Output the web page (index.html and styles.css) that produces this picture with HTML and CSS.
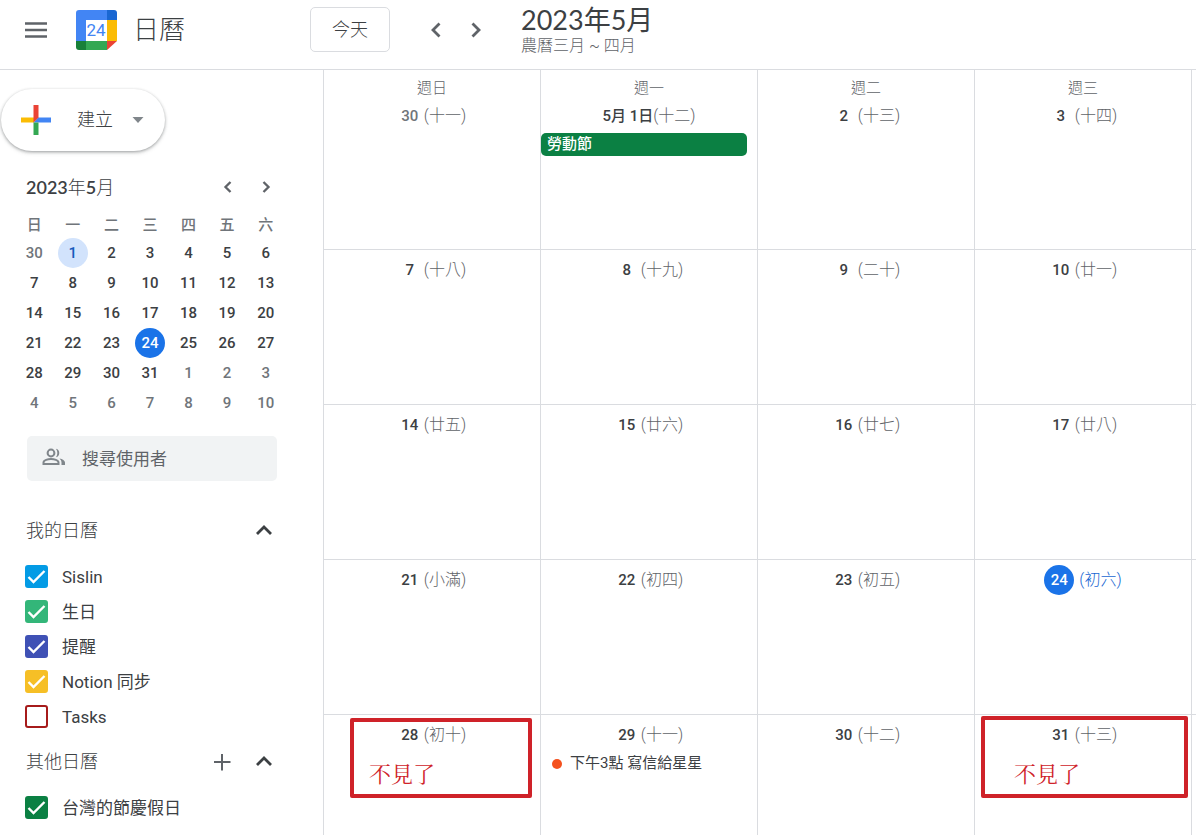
FILE: index.html
```html
<!DOCTYPE html>
<html lang="zh-Hant">
<head>
    <meta charset="UTF-8">
    <meta name="viewport" content="width=device-width, initial-scale=1">
    <title>日曆</title>
    <link rel="stylesheet" href="styles.css">
</head>
<body>
    <header class="topbar">
        <button class="icon-btn menu-btn" aria-label="主選單">
            <svg width="24" height="18" viewBox="0 0 24 18"><path d="M1 2.5h22M1 9h22M1 15.5h22" stroke="#5f6368" stroke-width="2.4"/></svg>
        </button>
        <svg class="logo" width="41" height="40" viewBox="0 0 41 40">
            <path d="M3 0H31V10H10V31H0V3Q0 0 3 0Z" fill="#4285f4"/>
            <path d="M31 0H38Q41 0 41 3V10H31Z" fill="#1967d2"/>
            <path d="M31 10H41V31H31Z" fill="#fbbc04"/>
            <path d="M10 31H31V40H10Z" fill="#34a853"/>
            <path d="M0 31H10V40H3Q0 40 0 37Z" fill="#188038"/>
            <path d="M31 31H41L31 40Z" fill="#ea4335"/>
            <path d="M10 10H31V31H10Z" fill="#fff"/>
            <text x="20" y="26" text-anchor="middle" class="logo-text">24</text>
        </svg>
        <span class="app-name">日曆</span>
        <button class="today-btn">今天</button>
        <div class="pager">
            <button class="icon-btn" aria-label="上個月"><svg width="24" height="24" viewBox="0 0 24 24"><path d="M15.5 5.5L9 12l6.500 6.500" class="arrow"/></svg></button>
            <button class="icon-btn" aria-label="下個月"><svg width="24" height="24" viewBox="0 0 24 24"><path d="M8.500 5.500L15 12l-6.500 6.500" class="arrow"/></svg></button>
        </div>
        <div class="heading">
            <h1>2023年5月</h1>
            <p>農曆三月 ~ 四月</p>
        </div>
    </header>

    <div class="layout">
        <aside class="sidebar">
            <button class="create-btn">
                <svg width="32" height="32" viewBox="0 0 32 32">
                    <path d="M1 13.500H14V18.500H1Z" fill="#fbbc04"/>
                    <path d="M18 13.500H31V18.500H18L13.500 18.500Z" fill="#4285f4"/>
                    <path d="M13.500 1H18.500V13.500L13.500 18.500Z" fill="#ea4335"/>
                    <path d="M13.500 18.500H18.500V31H13.500Z" fill="#34a853"/>
                </svg>
                <span>建立</span>
                <svg width="12" height="6" viewBox="0 0 12 6"><path d="M0.500 0H11.500L6 6Z" fill="#80868b"/></svg>
            </button>

            <div class="mini-head">
                <h2><b>2023</b>年<b>5</b>月</h2>
                <button class="icon-btn" aria-label="上個月"><svg width="20" height="20" viewBox="0 0 24 24"><path d="M15 6l-6 6 6 6" class="arrow"/></svg></button>
                <button class="icon-btn" aria-label="下個月"><svg width="20" height="20" viewBox="0 0 24 24"><path d="M9 6l6 6-6 6" class="arrow"/></svg></button>
            </div>
            <table class="mini">
                <thead>
                    <tr><th>日</th><th>一</th><th>二</th><th>三</th><th>四</th><th>五</th><th>六</th></tr>
                </thead>
                <tbody>
                    <tr><td class="other">30</td><td><span class="selected">1</span></td><td>2</td><td>3</td><td>4</td><td>5</td><td>6</td></tr>
                    <tr><td>7</td><td>8</td><td>9</td><td>10</td><td>11</td><td>12</td><td>13</td></tr>
                    <tr><td>14</td><td>15</td><td>16</td><td>17</td><td>18</td><td>19</td><td>20</td></tr>
                    <tr><td>21</td><td>22</td><td>23</td><td><span class="now">24</span></td><td>25</td><td>26</td><td>27</td></tr>
                    <tr><td>28</td><td>29</td><td>30</td><td>31</td><td class="other">1</td><td class="other">2</td><td class="other">3</td></tr>
                    <tr class="other"><td>4</td><td>5</td><td>6</td><td>7</td><td>8</td><td>9</td><td>10</td></tr>
                </tbody>
            </table>

            <div class="search">
                <svg width="24" height="22" viewBox="0 0 24 22">
                    <circle cx="9" cy="5" r="3.400" fill="none" stroke="#80868b" stroke-width="2"/>
                    <path d="M1.500 16v-1.500C1.500 12 6 11 9 11s7.500 1 7.500 3.500V16z" fill="none" stroke="#80868b" stroke-width="2"/>
                    <path d="M14 .800a4.400 4.400 0 0 1 0 8.500c1.800-2.500 1.800-6 0-8.500zM17.500 10.400c3 .600 5.500 2 5.500 4.200V17h-3.500v-2.500c0-1.600-.800-3-2-4.100z" fill="#80868b"/>
                </svg>
                <input type="text" placeholder="搜尋使用者" aria-label="搜尋使用者">
            </div>

            <div class="section-head first">
                <h3>我的日曆</h3>
                <button class="icon-btn" aria-label="收合"><svg width="24" height="24" viewBox="0 0 24 24"><path d="M5 15l7-7 7 7" class="arrow dark"/></svg></button>
            </div>
            <ul class="calendars">
                <li><label><input type="checkbox" class="blue" checked>Sislin</label></li>
                <li><label><input type="checkbox" class="mint" checked>生日</label></li>
                <li><label><input type="checkbox" class="indigo" checked>提醒</label></li>
                <li><label><input type="checkbox" class="yellow" checked>Notion 同步</label></li>
                <li><label><input type="checkbox" class="red">Tasks</label></li>
            </ul>
            <div class="section-head">
                <h3>其他日曆</h3>
                <button class="icon-btn" aria-label="新增其他日曆"><svg width="24" height="24" viewBox="0 0 24 24"><path d="M4 12H20.500M12 4V20.500" stroke="#5f6368" stroke-width="2"/></svg></button>
                <button class="icon-btn" aria-label="收合"><svg width="24" height="24" viewBox="0 0 24 24"><path d="M5 15l7-7 7 7" class="arrow dark"/></svg></button>
            </div>
            <ul class="calendars">
                <li><label><input type="checkbox" class="green" checked>台灣的節慶假日</label></li>
            </ul>
        </aside>

        <main class="month">
            <table>
                <colgroup><col><col><col><col><col class="cut"></colgroup>
                <thead>
                    <tr><th>週日</th><th>週一</th><th>週二</th><th>週三</th><th></th></tr>
                </thead>
                <tbody>
                    <tr>
                        <td><div class="date other"><b>30</b><span>(十一)</span></div></td>
                        <td>
                            <div class="date"><strong>5月 1日</strong><span>(十二)</span></div>
                            <div class="event holiday">勞動節</div>
                        </td>
                        <td><div class="date"><b>2</b><span>(十三)</span></div></td>
                        <td><div class="date"><b>3</b><span>(十四)</span></div></td>
                        <td></td>
                    </tr>
                    <tr>
                        <td><div class="date"><b>7</b><span>(十八)</span></div></td>
                        <td><div class="date"><b>8</b><span>(十九)</span></div></td>
                        <td><div class="date"><b>9</b><span>(二十)</span></div></td>
                        <td><div class="date"><b>10</b><span>(廿一)</span></div></td>
                        <td></td>
                    </tr>
                    <tr>
                        <td><div class="date"><b>14</b><span>(廿五)</span></div></td>
                        <td><div class="date"><b>15</b><span>(廿六)</span></div></td>
                        <td><div class="date"><b>16</b><span>(廿七)</span></div></td>
                        <td><div class="date"><b>17</b><span>(廿八)</span></div></td>
                        <td></td>
                    </tr>
                    <tr>
                        <td><div class="date"><b>21</b><span>(小滿)</span></div></td>
                        <td><div class="date"><b>22</b><span>(初四)</span></div></td>
                        <td><div class="date"><b>23</b><span>(初五)</span></div></td>
                        <td><div class="date today"><b>24</b><span>(初六)</span></div></td>
                        <td></td>
                    </tr>
                    <tr>
                        <td>
                            <div class="date"><b>28</b><span>(初十)</span></div>
                            <div class="note note-left">不見了</div>
                        </td>
                        <td>
                            <div class="date"><b>29</b><span>(十一)</span></div>
                            <div class="event timed">下午3點 寫信給星星</div>
                        </td>
                        <td><div class="date"><b>30</b><span>(十二)</span></div></td>
                        <td>
                            <div class="date"><b>31</b><span>(十三)</span></div>
                            <div class="note note-right">不見了</div>
                        </td>
                        <td></td>
                    </tr>
                </tbody>
            </table>
        </main>
    </div>
</body>
</html>
```
FILE: styles.css
```css
* {
    box-sizing: border-box;
}

body {
    margin: 0;
    height: 100vh;
    display: flex;
    flex-direction: column;
    overflow: hidden;
    font-family: Roboto, "Noto Sans CJK TC", sans-serif;
    line-height: 24px;
    color: #3c4043;
    background-color: #fff;
}

h1, h2, h3, p, ul {
    margin: 0;
    padding: 0;
    font-weight: 300;
}

button, input {
    font-family: inherit;
    line-height: inherit;
    color: inherit;
}

.icon-btn {
    display: flex;
    padding: 0;
    border: 0;
    background: none;
    cursor: pointer;
}

.arrow {
    fill: none;
    stroke: #5f6368;
    stroke-width: 2.8;
}

.arrow.dark {
    stroke: #3c4043;
}

/* top bar */
.topbar {
    flex: none;
    display: flex;
    align-items: center;
    height: 70px;
    padding: 0 24px 10px;
    border-bottom: 1px solid #dadce0;
}

.logo {
    margin-left: 28px;
}

.logo-text {
    font-size: 17px;
    fill: #4285f4;
}

.app-name {
    width: 177px;
    margin-left: 16px;
    font-size: 26px;
    font-weight: 300;
}

.today-btn {
    width: 80px;
    height: 45px;
    border: 1px solid #dadce0;
    border-radius: 5px;
    background-color: #fff;
    font-size: 18px;
    font-weight: 300;
}

.pager {
    display: flex;
    gap: 16px;
    margin-left: 34px;
}

.heading {
    margin-left: 33px;
    padding-top: 4px;
}

.heading h1 {
    font-family: Lato, "Noto Sans CJK TC", sans-serif;
    font-size: 27px;
    line-height: 28px;
    font-weight: 400;
}

.heading h1,
.mini-head h2 {
    white-space: nowrap;
}

.heading p {
    font-size: 16px;
    line-height: 24px;
    color: #5f6368;
}

/* sidebar */
.layout {
    flex: 1;
    display: flex;
    min-height: 0;
}

.sidebar {
    flex: none;
    width: 323px;
    overflow: hidden;
}

.create-btn {
    display: flex;
    align-items: center;
    height: 62px;
    margin: 19px 0 0 1px;
    padding: 0 21px 0 19px;
    border: 0;
    border-radius: 31px;
    background-color: #fff;
    box-shadow: 0 1px 3px rgba(60,64,67,0.4), 0 2px 4px rgba(60,64,67,0.15);
    font-size: 18px;
    font-weight: 300;
}

.create-btn span {
    margin: 0 19px 0 25px;
}

.mini-head {
    display: flex;
    align-items: center;
    gap: 18px;
    height: 32px;
    margin: 20px 47px 8px 26px;
}

.mini-head h2 {
    flex: 1;
    font-family: Lato, "Noto Sans CJK TC", sans-serif;
    font-size: 18px;
}

.mini-head b {
    font-weight: 600;
}

.mini {
    width: 270px;
    margin-left: 15px;
    table-layout: fixed;
    border-spacing: 0;
    text-align: center;
    font-size: 15px;
}

.mini th,
.mini td {
    height: 30px;
    padding: 0;
    font-weight: 500;
}

.mini th {
    height: 27px;
    font-size: 15px;
    color: #70757a;
}

.mini .other {
    color: #70757a;
}

.mini span {
    display: block;
    width: 30px;
    margin: 0 auto;
    border-radius: 50%;
    line-height: 30px;
}

.mini .selected {
    background-color: #d2e3fc;
    color: #185abc;
}

.mini .now {
    background-color: #1a73e8;
    color: #fff;
}

.search {
    display: flex;
    align-items: center;
    height: 45px;
    margin: 18px 46px 0 27px;
    padding-left: 15px;
    border-radius: 5px;
    background-color: #f1f3f4;
}

.search svg {
    flex: none;
}

.search input {
    width: 100%;
    margin-left: 16px;
    padding: 0;
    border: 0;
    outline: 0;
    background: none;
    font-size: 17px;
}

.search input::placeholder {
    color: #5f6368;
}

.section-head {
    display: flex;
    align-items: center;
    gap: 18px;
    height: 56px;
    padding: 0 47px 0 26px;
}

.section-head.first {
    margin-top: 22px;
}

.section-head h3 {
    flex: 1;
    font-size: 18px;
}

.calendars {
    list-style: none;
}

.calendars label {
    display: flex;
    align-items: center;
    height: 35px;
    padding-left: 25px;
    font-size: 17px;
}

.calendars li {
    font-weight: 400;
}

.calendars input {
    appearance: none;
    width: 23px;
    height: 23px;
    margin: 0 14px 0 0;
    border: 2px solid;
    border-radius: 3px;
}

.calendars input:checked {
    background: currentColor url("data:image/svg+xml,%3Csvg xmlns='http://www.w3.org/2000/svg' viewBox='0 0 19 19'%3E%3Cpath d='M1.500 10l5 5L17.500 4' fill='none' stroke='white' stroke-width='2.400'/%3E%3C/svg%3E") no-repeat center / 19px;
}

.blue { color: #039be5; }
.mint { color: #33b679; }
.indigo { color: #3f51b5; }
.yellow { color: #f6bf26; }
.red { color: #a61b1b; }
.green { color: #0b8043; }

/* month grid */
.month {
    flex: 1;
    min-width: 0;
    overflow: hidden;
}

.month table {
    width: 100%;
    table-layout: fixed;
    border-spacing: 0;
}

.month .cut {
    width: 5px;
}

.month th,
.month td {
    padding: 0;
    border-left: 1px solid #dadce0;
}

.month th {
    height: 26px;
    padding-top: 10px;
    font-size: 15px;
    line-height: 16px;
    font-weight: 300;
    color: #5f6368;
}

.month td {
    position: relative;
    height: 155px;
    padding-top: 10px;
    vertical-align: top;
    border-bottom: 1px solid #dadce0;
}

.month tbody tr:first-child td {
    height: 154px;
}

.month tr:last-child td {
    border-bottom: 0;
}

.date {
    display: flex;
    align-items: center;
    justify-content: center;
    height: 20px;
    margin-bottom: 7px;
    font-size: 15px;
    line-height: 20px;
    white-space: pre;
}

.date b {
    width: 24px;
    margin-right: 2px;
    text-align: center;
    font-weight: 500;
}

.date strong {
    font-weight: 500;
}

.date span {
    font-size: 16px;
    font-weight: 300;
    color: #5f6368;
}

.date.other {
    color: #70757a;
}

.date.today b {
    width: 30px;
    margin-right: 5px;
    border-radius: 50%;
    line-height: 30px;
    background-color: #1a73e8;
    color: #fff;
}

.date.today span {
    color: #1967d2;
}

.event {
    height: 23px;
    font-size: 15px;
    line-height: 23px;
    white-space: nowrap;
}

.holiday {
    margin-right: 10px;
    padding-left: 6px;
    border-radius: 5px;
    background-color: #0b8043;
    color: #fff;
    font-weight: 500;
}

.timed {
    display: flex;
    align-items: center;
    padding-left: 11px;
}

.timed::before {
    content: "";
    width: 10px;
    height: 10px;
    margin-right: 8px;
    border-radius: 50%;
    background-color: #f4511e;
}

/* red frames laid over the missing days */
.note {
    position: absolute;
    border: 4px solid #cf2229;
    border-radius: 2px;
    font-family: "Liberation Serif", "Noto Serif CJK TC", "Noto Sans CJK TC", serif;
    font-size: 22px;
    line-height: 32px;
    color: #cf2229;
}

.note-left {
    top: 3px;
    left: 26px;
    right: 8px;
    height: 80px;
    padding: 37px 0 0 15px;
}

.note-right {
    top: 1px;
    left: 6px;
    right: 3px;
    height: 82px;
    padding: 39px 0 0 29px;
}
```
